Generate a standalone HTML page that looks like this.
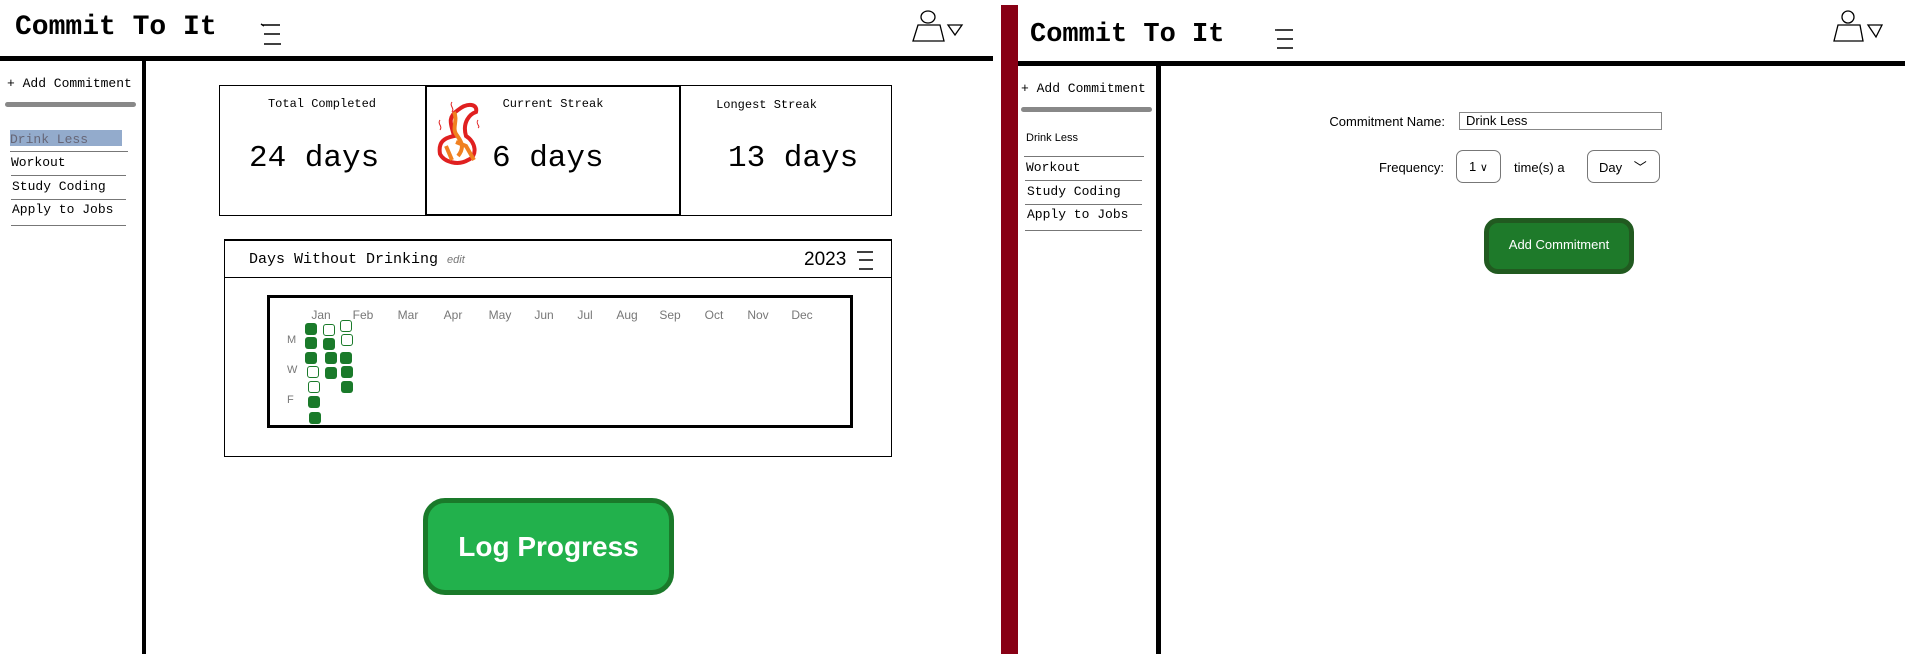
<!DOCTYPE html>
<html><head><meta charset="utf-8"><style>
*{margin:0;padding:0;box-sizing:border-box}
body{width:1905px;height:654px;background:#fff;position:relative;overflow:hidden;font-family:"Liberation Mono",monospace;color:#000}
.a{position:absolute}
.title{font-family:"Liberation Mono",monospace;font-weight:bold;font-size:28px;white-space:nowrap}
.side{font-size:13px;white-space:nowrap}
.line{background:#000}
.hr{position:absolute;height:1px;background:#777}
.cell{position:absolute;width:12px;height:12px;border-radius:3px;background:#1a7a2a}
.cell.e{background:#fff;border:1.5px solid #1a7a2a}
.mon{position:absolute;top:308px;font-family:"Liberation Sans",sans-serif;font-size:12px;color:#777;transform:translateX(-50%)}
.sans{font-family:"Liberation Sans",sans-serif}
.dl{position:absolute;left:287px;font-family:"Liberation Sans",sans-serif;font-size:11px;color:#777}
</style></head><body>

<!-- LEFT PANEL -->
<div class="a title" style="left:15px;top:12px">Commit To It</div>
<svg class="a" style="left:258px;top:22px" width="30" height="26"><path d="M4 3h18M6 12h16M6 22h17M3 2l3 2" stroke="#000" stroke-width="1.4" fill="none"/></svg>
<svg class="a" style="left:908px;top:8px" width="60" height="40"><ellipse cx="20" cy="9" rx="7" ry="6" fill="none" stroke="#000" stroke-width="1.3"/><path d="M10 17h22l4 16H5z" fill="none" stroke="#000" stroke-width="1.3"/><path d="M40 17h14l-7 10z" fill="none" stroke="#000" stroke-width="1.3"/></svg>
<div class="a line" style="left:0;top:56px;width:993px;height:5px"></div>
<div class="a line" style="left:142px;top:60px;width:4px;height:594px"></div>

<div class="a side" style="left:7px;top:76px;font-size:13px">+ Add Commitment</div>
<div class="a" style="left:5px;top:102px;width:131px;height:5px;background:#888;border-radius:3px"></div>
<div class="a" style="left:10px;top:130px;width:112px;height:16px;background:#93abcc"></div>
<div class="a side" style="left:10px;top:132px;color:#667">Drink Less</div>
<div class="hr" style="left:10px;top:151px;width:118px"></div>
<div class="a side" style="left:11px;top:155px">Workout</div>
<div class="hr" style="left:11px;top:175px;width:115px"></div>
<div class="a side" style="left:12px;top:179px">Study Coding</div>
<div class="hr" style="left:11px;top:199px;width:115px"></div>
<div class="a side" style="left:12px;top:202px">Apply to Jobs</div>
<div class="hr" style="left:11px;top:225px;width:115px"></div>

<!-- stats -->
<div class="a" style="left:219px;top:85px;width:673px;height:131px;border:1.5px solid #000"></div>
<div class="a" style="left:425px;top:85px;width:256px;height:131px;border:2px solid #000"></div>
<div class="a" style="left:219px;top:97px;width:206px;text-align:center;font-size:12px">Total Completed</div>
<div class="a" style="left:249px;top:141px;font-size:31px">24 days</div>
<div class="a" style="left:425px;top:97px;width:256px;text-align:center;font-size:12px">Current Streak</div>
<svg class="a" style="left:432px;top:100px" width="52" height="80"><path d="M26 10c10-8 20-6 18 2-6 2-14 10-10 24 10 6 12 20 2 24-10 6-24 2-28-6-2-12 4-16 14-18-2-10-8-18 4-26z" fill="none" stroke="#e02020" stroke-width="4"/><path d="M22 12c4 8-2 16 2 22 4 6 10 12 2 22M14 46l6 14M24 42l10 4 8 14" fill="none" stroke="#f08020" stroke-width="4"/><path d="M20 2c-3 4 3 6 0 10M8 20c-3 4 3 6 0 10M46 20c-3 4 3 6 0 8" fill="none" stroke="#e02020" stroke-width="1"/></svg>
<div class="a" style="left:492px;top:141px;font-size:31px">6 days</div>
<div class="a" style="left:681px;top:98px;width:211px;text-align:center;font-size:12px;padding-right:40px">Longest Streak</div>
<div class="a" style="left:728px;top:141px;font-size:31px">13 days</div>

<!-- heatmap card -->
<div class="a" style="left:224px;top:239px;width:668px;height:218px;border:1.5px solid #000;border-top-width:2px"></div>
<div class="a" style="left:224px;top:277px;width:668px;height:1px;background:#000"></div>
<div class="a" style="left:249px;top:251px;font-size:15px">Days Without Drinking <span class="sans" style="font-size:11px;color:#777;font-style:italic">edit</span></div>
<div class="a sans" style="left:804px;top:249px;font-size:19px">2023</div>
<svg class="a" style="left:855px;top:250px" width="22" height="22"><path d="M2 2h16M4 10h14M4 19h14" stroke="#000" stroke-width="1.4" fill="none"/></svg>
<div class="a" style="left:267px;top:295px;width:586px;height:133px;border:3px solid #000"></div>
<div class="mon" style="left:321px">Jan</div><div class="mon" style="left:363px">Feb</div><div class="mon" style="left:408px">Mar</div><div class="mon" style="left:453px">Apr</div><div class="mon" style="left:500px">May</div><div class="mon" style="left:544px">Jun</div><div class="mon" style="left:585px">Jul</div><div class="mon" style="left:627px">Aug</div><div class="mon" style="left:670px">Sep</div><div class="mon" style="left:714px">Oct</div><div class="mon" style="left:758px">Nov</div><div class="mon" style="left:802px">Dec</div>
<div class="dl" style="top:334px">M</div>
<div class="dl" style="top:364px">W</div>
<div class="dl" style="top:394px">F</div>
<div class="cell" style="left:305px;top:323px"></div>
<div class="cell" style="left:305px;top:337px"></div>
<div class="cell" style="left:305px;top:352px"></div>
<div class="cell e" style="left:307px;top:366px"></div>
<div class="cell e" style="left:308px;top:381px"></div>
<div class="cell" style="left:308px;top:396px"></div>
<div class="cell" style="left:309px;top:412px"></div>
<div class="cell e" style="left:323px;top:324px"></div>
<div class="cell" style="left:323px;top:338px"></div>
<div class="cell" style="left:325px;top:352px"></div>
<div class="cell" style="left:325px;top:367px"></div>
<div class="cell e" style="left:340px;top:320px"></div>
<div class="cell e" style="left:341px;top:334px"></div>
<div class="cell" style="left:340px;top:352px"></div>
<div class="cell" style="left:341px;top:366px"></div>
<div class="cell" style="left:341px;top:381px"></div>

<!-- Log progress -->
<div class="a sans" style="left:423px;top:498px;width:251px;height:97px;background:#22b14c;border:5px solid #1a7a2a;border-radius:22px;color:#fff;font-weight:bold;font-size:28px;text-align:center;line-height:87px">Log Progress</div>

<!-- red divider -->
<div class="a" style="left:1001px;top:5px;width:17px;height:649px;background:#880015"></div>

<!-- RIGHT PANEL -->
<div class="a title" style="left:1030px;top:20px;font-size:27px">Commit To It</div>
<svg class="a" style="left:1272px;top:27px" width="30" height="24"><path d="M5 3h16M5 12h16M5 21h16M4 2v2" stroke="#000" stroke-width="1.4" fill="none"/></svg>
<svg class="a" style="left:1830px;top:8px" width="60" height="40"><ellipse cx="18" cy="9" rx="6" ry="6" fill="none" stroke="#000" stroke-width="1.3"/><path d="M8 17h22l3 16H4z" fill="none" stroke="#000" stroke-width="1.3"/><path d="M38 17h14l-6 12z" fill="none" stroke="#000" stroke-width="1.3"/></svg>
<div class="a line" style="left:1018px;top:61px;width:887px;height:5px"></div>
<div class="a line" style="left:1156px;top:64px;width:5px;height:590px"></div>

<div class="a side" style="left:1021px;top:81px;font-size:13px">+ Add Commitment</div>
<div class="a" style="left:1021px;top:107px;width:131px;height:5px;background:#888;border-radius:3px"></div>
<div class="a sans" style="left:1026px;top:132px;font-size:11px">Drink Less</div>
<div class="hr" style="left:1024px;top:156px;width:120px"></div>
<div class="a side" style="left:1026px;top:160px">Workout</div>
<div class="hr" style="left:1025px;top:180px;width:117px"></div>
<div class="a side" style="left:1027px;top:184px">Study Coding</div>
<div class="hr" style="left:1025px;top:204px;width:117px"></div>
<div class="a side" style="left:1027px;top:207px">Apply to Jobs</div>
<div class="hr" style="left:1025px;top:230px;width:117px"></div>

<div class="a sans" style="left:1300px;top:114px;width:145px;text-align:right;font-size:13px">Commitment Name:</div>
<div class="a sans" style="left:1459px;top:112px;width:203px;height:18px;border:1px solid #888;font-size:13px;padding-left:6px;line-height:15px">Drink Less</div>
<div class="a sans" style="left:1340px;top:160px;width:104px;text-align:right;font-size:13px">Frequency:</div>
<div class="a sans" style="left:1456px;top:150px;width:45px;height:33px;border:1px solid #777;border-radius:7px;font-size:13px;line-height:31px;padding-left:12px">1 <span style="font-size:11px">∨</span></div>
<div class="a sans" style="left:1514px;top:160px;font-size:13px">time(s) a</div>
<div class="a sans" style="left:1587px;top:150px;width:73px;height:33px;border:1px solid #777;border-radius:7px;font-size:13px;line-height:33px;padding-left:11px">Day <span style="margin-left:8px">﹀</span></div>
<div class="a sans" style="left:1484px;top:218px;width:150px;height:56px;background:#1e7a2a;border:5px solid #215a20;border-radius:14px;color:#fff;font-size:13px;text-align:center;line-height:44px">Add Commitment</div>

</body></html>
